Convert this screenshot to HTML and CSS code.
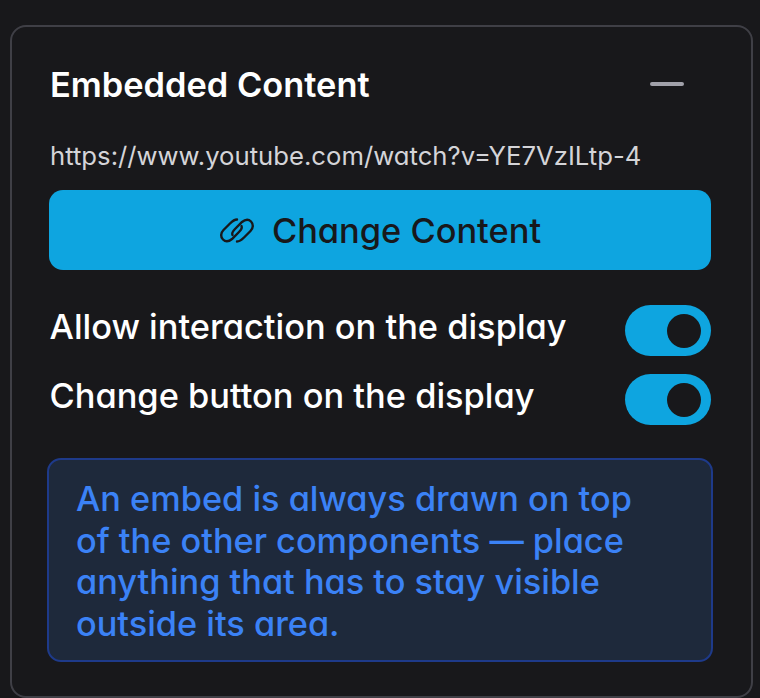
FILE: index.html
```html
<!DOCTYPE html>
<html lang="en">
<head>
    <meta charset="UTF-8">
    <title>Embedded Content</title>
    <link rel="stylesheet" href="styles.css">
</head>
<body>
    <div class="panel">
        <div class="panelHeader">
            <h2 class="title">Embedded Content</h2>
            <span class="collapse"></span>
        </div>
        <p class="url">https://www.youtube.com/watch?v=YE7VzILtp-4</p>
        <button class="changeButton">
            <svg class="linkIcon" viewBox="0 0 36 29" fill="none" stroke="#18181b" stroke-width="2.4" stroke-linecap="round">
                <path d="M18 3.5 C15.5 3.5 13 5.5 11 7.5 L4.5 14 C1.5 17 1.5 21 4 23.5 C6.5 26 10 25.5 13 23 L20 16 C22 14 23.5 12 22.5 10"/>
                <path d="M18 25.5 C20.5 25.5 23 23.5 25 21.5 L31.5 15 C34.5 12 34.5 8 32 5.5 C29.5 3 26 3.5 23 6 L16 13 C14 15 12.5 17 13.5 19"/>
            </svg>
            <span>Change Content</span>
        </button>
        <div class="optionRow">
            <span class="optionLabel">Allow interaction on the display</span>
            <span class="toggle"><span class="knob"></span></span>
        </div>
        <div class="optionRow">
            <span class="optionLabel">Change button on the display</span>
            <span class="toggle"><span class="knob"></span></span>
        </div>
        <div class="notice">
            An embed is always drawn on top<br>
            of the other components — place<br>
            anything that has to stay visible<br>
            outside its area.
        </div>
    </div>
</body>
</html>
```

FILE: styles.css
```css
html,body{
    margin: 0px;
    padding: 0px;
    height: 100%;
    background-color: #18181b;
    overflow: hidden;
}
body{
    padding: 25px 7px 0px 10px;
    box-sizing: border-box;
    font-family: "Inter", "Liberation Sans", sans-serif;
    font-feature-settings: "cv11";
}
.panel{
    height: 673px;
    box-sizing: border-box;
    border: 2px solid #3f3f46;
    border-radius: 16px;
    padding: 0px 40px 0px 37px;
    background-color: #18181b;
}
.panelHeader{
    height: 114px;
    display: flex;
    justify-content: space-between;
    align-items: center;
    padding-left: 1px;
    padding-right: 27px;
    box-sizing: border-box;
}
.title{
    margin: 0px;
    font-size: 34.4px;
    font-weight: 600;
    color: #ffffff;
}
.collapse{
    width: 34px;
    height: 4px;
    border-radius: 2px;
    background-color: #a1a1aa;
}
.url{
    margin: 0px;
    padding-left: 1px;
    height: 49px;
    font-size: 25.7px;
    line-height: 30px;
    color: #d4d4d8;
}
.changeButton{
    width: 100%;
    height: 80px;
    border: none;
    border-radius: 14px;
    background-color: #0ea5e0;
    color: #18181b;
    font-family: inherit;
    font-feature-settings: inherit;
    font-size: 34.4px;
    font-weight: 500;
    display: flex;
    justify-content: center;
    align-items: center;
    gap: 17px;
    margin-bottom: 35px;
}
.linkIcon{
    width: 36px;
    height: 29px;
}
.optionRow{
    height: 51px;
    display: flex;
    justify-content: space-between;
    align-items: center;
    margin-bottom: 18px;
    padding-left: 0.5px;
}
.optionLabel{
    font-size: 34.4px;
    font-weight: 500;
    line-height: 44px;
    padding-bottom: 7px;
    color: #ffffff;
}
.toggle{
    width: 86px;
    height: 51px;
    border-radius: 26px;
    background-color: #0ea5e0;
    display: flex;
    justify-content: flex-end;
    align-items: center;
    padding-right: 10px;
    box-sizing: border-box;
}
.knob{
    width: 34px;
    height: 34px;
    border-radius: 50%;
    background-color: #18181b;
}
.notice{
    margin: 33px -2px 0px -2px;
    height: 204px;
    box-sizing: border-box;
    border: 2px solid #1e3a8a;
    border-radius: 14px;
    background-color: #1e293b;
    color: #3b82f6;
    font-size: 34.3px;
    font-weight: 500;
    line-height: 41.5px;
    padding: 18px 27px;
    white-space: nowrap;
}
```
